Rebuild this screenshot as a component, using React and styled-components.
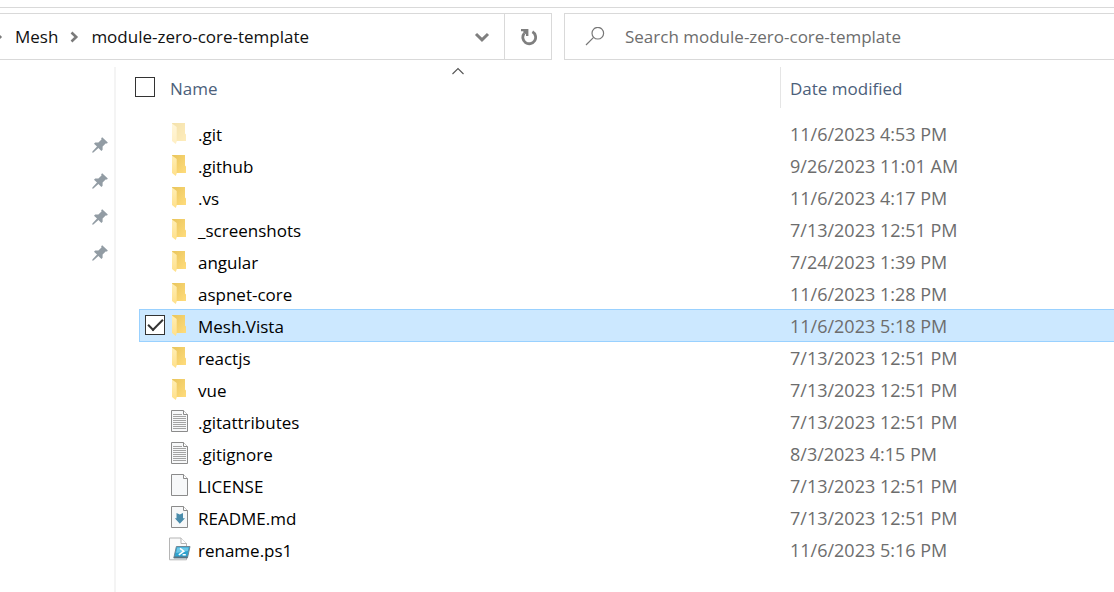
import React, { useState } from "react";
import styled, { createGlobalStyle } from "styled-components";

const GlobalStyle = createGlobalStyle`
  * { box-sizing: border-box; }
  body {
    margin: 0;
    background: #fff;
    color: #000;
    font-family: "Open Sans", "Segoe UI", sans-serif;
    font-size: 17px;
    line-height: 24px;
  }
`;

const Window = styled.div`
  min-height: 100vh;
  display: flex;
  flex-direction: column;
  overflow: hidden;
`;

const RibbonEdge = styled.div`
  height: 8px;
  border-bottom: 1px solid #d9d9d9;
  margin-bottom: 5px;
`;

const Toolbar = styled.div`
  display: grid;
  grid-template-columns: 552fr 550fr;
  gap: 12px;
  height: 47px;
`;

const AddressBar = styled.div`
  display: flex;
  border: solid #d9d9d9;
  border-width: 1px 1px 1px 0;
  min-width: 0;
`;

const Breadcrumb = styled.nav`
  flex: 1;
  display: flex;
  align-items: center;
  overflow: hidden;
  white-space: nowrap;

  svg { flex: none; }
  svg:first-child { margin-left: -6px; }
`;

const Crumb = styled.a`
  color: #111;
  text-decoration: none;
  padding: 0 12px;
`;

const BarButton = styled.button`
  width: ${(p) => (p.$divided ? 47 : 44)}px;
  display: flex;
  align-items: center;
  justify-content: center;
  padding: 0;
  border: 0;
  border-left: ${(p) => (p.$divided ? "1px solid #d9d9d9" : "0")};
  background: none;
`;

const SearchBox = styled.label`
  display: flex;
  align-items: center;
  gap: 20px;
  padding-left: 20px;
  border: solid #d9d9d9;
  border-width: 1px 0 1px 1px;
  min-width: 0;

  svg { flex: none; }
`;

const SearchInput = styled.input`
  flex: 1;
  min-width: 0;
  height: 24px;
  padding: 0;
  border: 0;
  outline: 0;
  background: none;
  font: inherit;
  color: #111;

  &::placeholder { color: #6d6d6d; opacity: 1; }
`;

const Body = styled.div`
  flex: 1;
  display: flex;
  padding-top: 7px;
`;

const QuickAccess = styled.aside`
  flex: 0 0 116px;
  display: flex;
  flex-direction: column;
  align-items: flex-end;
  padding: 60px 5px 0 0;
  border-right: 2px solid #f4f4f4;
`;

const PinButton = styled.button`
  width: 18px;
  height: 36px;
  display: flex;
  align-items: center;
  justify-content: center;
  padding: 0;
  border: 0;
  background: none;
`;

const FileTable = styled.table`
  flex: 1;
  display: block;
  min-width: 0;

  thead, tbody { display: block; }
`;

const HeaderRow = styled.tr`
  display: grid;
  grid-template-columns: 645px 1fr;
  height: 41px;
  margin: 0 0 10px 19px;
`;

const HeaderCell = styled.th`
  position: relative;
  display: flex;
  align-items: center;
  gap: 15px;
  padding: 0 0 1px ${(p) => (p.$divided ? 9 : 0)}px;
  border-left: ${(p) => (p.$divided ? "1px solid #e5e5e5" : "0")};
  font-weight: 400;
`;

const SortButton = styled.button`
  padding: 3px 0 0;
  border: 0;
  background: none;
  font: inherit;
  color: #4c607a;
`;

const SortMark = styled.svg`
  position: absolute;
  top: 0;
  left: 50%;
  transform: translateX(-50%);
`;

const Tick = styled.input`
  appearance: none;
  width: 20px;
  height: 20px;
  margin: 0;
  border: 1px solid #333;
  background: #fff;
  display: grid;
  place-items: center;
  opacity: ${(p) => (p.$quiet && !p.checked ? 0 : 1)};

  &:hover, &:focus-visible { opacity: 1; }
  &:checked::after {
    content: "";
    width: 13px;
    height: 6px;
    border: solid #333;
    border-width: 0 0 2px 2px;
    transform: translateY(-2px) rotate(-45deg);
  }
`;

const FileRow = styled.tr`
  display: grid;
  grid-template-columns: 30px 29px 592px 1fr;
  height: 32px;
  margin-left: 23px;
  background: ${(p) => (p.$selected ? "#cce8ff" : "transparent")};
  box-shadow: ${(p) =>
    p.$selected ? "inset 1px -1px #99d1ff, 0 -1px #99d1ff" : "none"};
`;

const Cell = styled.td`
  display: flex;
  align-items: center;
  padding: 0;
  white-space: nowrap;
`;

const TickCell = styled(Cell)`
  padding: 0 0 2px 6px;
`;

const IconCell = styled(Cell)`
  padding-bottom: 2px;
`;

const NameCell = styled(Cell)`
  padding-top: 2px;

  label { color: #000; }
`;

const DateCell = styled(Cell)`
  font-size: 18px;
  color: #6d6d6d;
`;

const CrumbArrow = () => (
  <svg width="9" height="12" viewBox="0 0 9 12" aria-hidden="true">
    <path d="M1.5 1.5 6.2 6 1.5 10.5" fill="none" stroke="#7a7a7a" strokeWidth="2.6" />
  </svg>
);

const DownArrow = () => (
  <svg width="16" height="12" viewBox="0 0 16 12" aria-hidden="true">
    <path d="M2 3 8 8.8 14 3" fill="none" stroke="#7f7f7f" strokeWidth="3" />
  </svg>
);

const RefreshIcon = () => (
  <svg width="18" height="18" viewBox="0 0 18 18" aria-hidden="true">
    <path d="M13.4 3.8A6.4 6.4 0 1 1 5.2 5.4" fill="none" stroke="#7f7f7f" strokeWidth="2.8" />
    <path d="M2 1H9.4V8H7V6L4.4 5.4V3.2H2Z" fill="#7f7f7f" />
  </svg>
);

const SearchIcon = () => (
  <svg width="20" height="20" viewBox="0 0 20 20" aria-hidden="true">
    <g fill="none" stroke="#777" strokeWidth="1.2">
      <circle cx="12.8" cy="6.2" r="5.8" />
      <path d="M8.6 10.4 1 18" />
    </g>
  </svg>
);

const PinIcon = () => (
  <svg width="16" height="16" viewBox="0 0 16 16" aria-hidden="true">
    <path
      d="M10.2 .2 15.8 5.6 15 6.6 13.6 6.5 10.6 9.6 10.6 12.8 9.4 14 6.4 11 1.4 15.6.3 15.7.4 14.6 5 9.6 2 6.8 3.2 5.4 6.4 5.4 9.5 2.6 9.2 1.2Z"
      fill="#929ca4"
    />
  </svg>
);

const FolderIcon = ({ faded }) => (
  <svg width="22" height="24" viewBox="0 0 22 24" opacity={faded ? 0.5 : 1} aria-hidden="true">
    <defs>
      <linearGradient id="folderBack" x1="0" y1="0" x2="1" y2="1">
        <stop offset="0" stopColor="#e9c55c" />
        <stop offset="1" stopColor="#ffdc7c" />
      </linearGradient>
      <linearGradient id="folderFront" x1="0" y1="0" x2="0" y2="1">
        <stop offset="0" stopColor="#ffeeb4" />
        <stop offset="1" stopColor="#ffe08a" />
      </linearGradient>
    </defs>
    <path d="M3 2H16V12.5L17 13.5V20H3Z" fill="url(#folderBack)" />
    <path d="M3 2.4 7.7 6V20.5L6.8 23 3 20Z" fill="url(#folderFront)" />
  </svg>
);

const Page = () => (
  <>
    <path d="M2.5 1.5H14.5L18.5 5.5V22.5H2.5Z" fill="#f7f8f9" stroke="#8b8b8b" />
    <path d="M14.5 1.5V5.5H18.5" fill="#fff" stroke="#8b8b8b" />
  </>
);

const TextIcon = () => (
  <svg width="22" height="24" viewBox="0 0 22 24" aria-hidden="true">
    <Page />
    <path
      d="M4 5.5H13M4 7.5H17M4 9.5H17M4 11.5H17M4 13.5H17M4 15.5H17M4 17.5H17M4 19.5H17"
      stroke="#a3a3a3"
    />
  </svg>
);

const BlankIcon = () => (
  <svg width="22" height="24" viewBox="0 0 22 24" aria-hidden="true">
    <Page />
  </svg>
);

const MarkdownIcon = () => (
  <svg width="22" height="24" viewBox="0 0 22 24" aria-hidden="true">
    <Page />
    <path d="M7.5 8 10.8 9.4 14 8V13.2H16L10.8 18.8 5.8 13.2H7.5Z" fill="#4a8cab" />
  </svg>
);

const ScriptIcon = () => (
  <svg width="22" height="24" viewBox="0 0 22 24" aria-hidden="true">
    <path d="M.5 1H12L17.5 6.5V22.8H.5Z" fill="#fafafa" stroke="#b5b5b5" />
    <path d="M12 1V6.5H17.5" fill="#fff" stroke="#b5b5b5" />
    <path d="M7.4 9.5H21L18.4 21H4.8Z" fill="#2fa3cf" stroke="#6e8796" />
    <path d="M8.2 10.6H19.6L18.8 14 7.2 16Z" fill="#6cc8e8" />
    <path d="M5.2 19.5H18.6L18.2 21H4.8Z" fill="#5b7180" />
    <path d="M11 11.3 14.8 14.2 9.8 17.8M13.6 17.8H16.8" fill="none" stroke="#fff" strokeWidth="1.5" />
  </svg>
);

const icons = {
  hidden: <FolderIcon faded />,
  folder: <FolderIcon />,
  text: <TextIcon />,
  blank: <BlankIcon />,
  markdown: <MarkdownIcon />,
  script: <ScriptIcon />,
};

const files = [
  [".git", "11/6/2023 4:53 PM", "hidden"],
  [".github", "9/26/2023 11:01 AM", "folder"],
  [".vs", "11/6/2023 4:17 PM", "folder"],
  ["_screenshots", "7/13/2023 12:51 PM", "folder"],
  ["angular", "7/24/2023 1:39 PM", "folder"],
  ["aspnet-core", "11/6/2023 1:28 PM", "folder"],
  ["Mesh.Vista", "11/6/2023 5:18 PM", "folder"],
  ["reactjs", "7/13/2023 12:51 PM", "folder"],
  ["vue", "7/13/2023 12:51 PM", "folder"],
  [".gitattributes", "7/13/2023 12:51 PM", "text"],
  [".gitignore", "8/3/2023 4:15 PM", "text"],
  ["LICENSE", "7/13/2023 12:51 PM", "blank"],
  ["README.md", "7/13/2023 12:51 PM", "markdown"],
  ["rename.ps1", "11/6/2023 5:16 PM", "script"],
];

export default function App() {
  const [selected, setSelected] = useState(["Mesh.Vista"]);
  const toggle = (name) =>
    setSelected((s) => (s.includes(name) ? s.filter((n) => n !== name) : [...s, name]));
  const all = selected.length === files.length;

  return (
    <Window>
      <GlobalStyle />
      <RibbonEdge />
      <Toolbar>
        <AddressBar>
          <Breadcrumb aria-label="Path">
            <CrumbArrow />
            <Crumb href="#mesh">Mesh</Crumb>
            <CrumbArrow />
            <Crumb href="#template">module-zero-core-template</Crumb>
          </Breadcrumb>
          <BarButton aria-label="Previous locations"><DownArrow /></BarButton>
          <BarButton $divided aria-label="Refresh"><RefreshIcon /></BarButton>
        </AddressBar>
        <SearchBox>
          <SearchIcon />
          <SearchInput
            type="text"
            aria-label="Search"
            placeholder="Search module-zero-core-template"
          />
        </SearchBox>
      </Toolbar>
      <Body>
        <QuickAccess>
          {[1, 2, 3, 4].map((n) => (
            <PinButton key={n} aria-label={`Pinned item ${n}`}><PinIcon /></PinButton>
          ))}
        </QuickAccess>
        <FileTable>
          <thead>
            <HeaderRow>
              <HeaderCell>
                <Tick
                  type="checkbox"
                  aria-label="Select all"
                  checked={all}
                  onChange={() => setSelected(all ? [] : files.map((f) => f[0]))}
                />
                <SortButton>Name</SortButton>
                <SortMark width="13" height="9" viewBox="0 0 13 9" aria-hidden="true">
                  <path d="M1 7 6.5 1.5 12 7" fill="none" stroke="#555" strokeWidth="1.1" />
                </SortMark>
              </HeaderCell>
              <HeaderCell $divided>
                <SortButton>Date modified</SortButton>
              </HeaderCell>
            </HeaderRow>
          </thead>
          <tbody>
            {files.map(([name, date, kind], i) => (
              <FileRow key={name} $selected={selected.includes(name)}>
                <TickCell>
                  <Tick
                    type="checkbox"
                    id={`file-${i}`}
                    $quiet
                    checked={selected.includes(name)}
                    onChange={() => toggle(name)}
                  />
                </TickCell>
                <IconCell>{icons[kind]}</IconCell>
                <NameCell><label htmlFor={`file-${i}`}>{name}</label></NameCell>
                <DateCell>{date}</DateCell>
              </FileRow>
            ))}
          </tbody>
        </FileTable>
      </Body>
    </Window>
  );
}
